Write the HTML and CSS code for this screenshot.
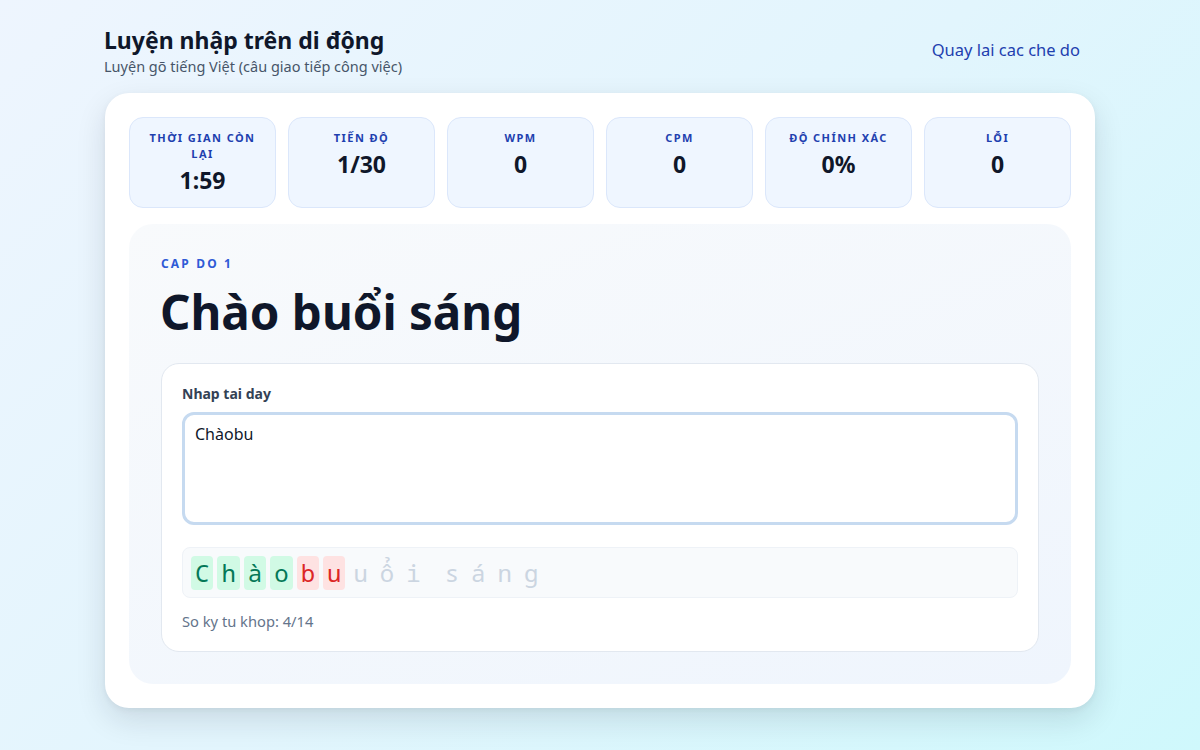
FILE: index.html
```html
<!DOCTYPE html>
<html lang="vi">
<head>
<meta charset="utf-8">
<title>Luyện nhập trên di động</title>
<link rel="stylesheet" href="styles.css">
</head>
<body>
<div class="page">
  <header class="header">
    <div>
      <h1 class="title">Luyện nhập trên di động</h1>
      <p class="subtitle">Luyện gõ tiếng Việt (câu giao tiếp công việc)</p>
    </div>
    <a class="back" href="#">Quay lai cac che do</a>
  </header>
  <main class="card">
    <section class="stats">
      <div class="stat"><div class="stat-label">Thời gian còn lại</div><div class="stat-value">1:59</div></div>
      <div class="stat"><div class="stat-label">Tiến độ</div><div class="stat-value">1/30</div></div>
      <div class="stat"><div class="stat-label">WPM</div><div class="stat-value">0</div></div>
      <div class="stat"><div class="stat-label">CPM</div><div class="stat-value">0</div></div>
      <div class="stat"><div class="stat-label">Độ chính xác</div><div class="stat-value">0%</div></div>
      <div class="stat"><div class="stat-label">Lỗi</div><div class="stat-value">0</div></div>
    </section>
    <section class="practice">
      <div class="level">CAP DO 1</div>
      <h2 class="phrase">Chào buổi sáng</h2>
      <div class="input-card">
        <label class="input-label">Nhap tai day</label>
        <div class="textarea">Chàobu</div>
        <div class="chars">
          <span class="ch ok">C</span><span class="ch ok">h</span><span class="ch ok">à</span><span class="ch ok">o</span><span class="ch bad">b</span><span class="ch bad">u</span><span class="ch">u</span><span class="ch">ổ</span><span class="ch">i</span><span class="ch"> </span><span class="ch">s</span><span class="ch">á</span><span class="ch">n</span><span class="ch">g</span>
        </div>
        <div class="match">So ky tu khop: 4/14</div>
      </div>
    </section>
  </main>
</div>
</body>
</html>
```
FILE: styles.css
```css
* { box-sizing: border-box; }
html, body { margin: 0; padding: 0; }
body {
  min-height: 750px;
  font-family: "Noto Sans", "Open Sans", sans-serif;
  color: #0f172a;
  background: linear-gradient(135deg, #eef5fe 0%, #e2f5fd 50%, #cff8fc 100%);
}
.page {
  width: 990px;
  margin: 0 auto;
  padding-top: 25px;
}
.header {
  display: flex;
  justify-content: space-between;
  align-items: flex-start;
}
.title {
  margin: 0 0 0 -1px;
  font-size: 23px;
  line-height: 30px;
  font-weight: 700;
  color: #0f172a;
}
.subtitle {
  margin: 1px 0 0 -1px;
  font-size: 14.5px;
  line-height: 20px;
  color: #475569;
}
.back {
  margin-top: 13px;
  margin-right: 15px;
  font-size: 16.5px;
  line-height: 24px;
  color: #1e40af;
  text-decoration: none;
}
.card {
  margin-top: 17px;
  background: #ffffff;
  border-radius: 24px;
  padding: 24px;
  box-shadow: 0 12px 30px rgba(15, 23, 42, 0.12), 0 2px 6px rgba(15, 23, 42, 0.05);
}
.stats {
  display: grid;
  grid-template-columns: repeat(6, 1fr);
  gap: 12px;
}
.stat {
  height: 91px;
  background: #eff6ff;
  border: 1px solid #dbe7fb;
  border-radius: 14px;
  padding: 12px 16px;
  text-align: center;
}
.stat-label {
  font-size: 11px;
  line-height: 16px;
  font-weight: 700;
  letter-spacing: 0.13em;
  text-transform: uppercase;
  color: #1e40af;
}
.stat-value {
  margin-top: 3px;
  font-size: 23px;
  line-height: 30px;
  font-weight: 700;
  color: #0f172a;
}
.practice {
  margin-top: 16px;
  border-radius: 24px;
  background: linear-gradient(160deg, #f8fafc 0%, #eff5fd 100%);
  padding: 31px 32px 32px;
}
.level {
  font-size: 12px;
  line-height: 18px;
  font-weight: 700;
  letter-spacing: 0.18em;
  color: #2f5bd6;
}
.phrase {
  margin: 9px 0 0 -1px;
  font-size: 47.5px;
  line-height: 60px;
  font-weight: 700;
  color: #0f172a;
}
.input-card {
  margin-top: 21px;
  background: #ffffff;
  border: 1px solid #e2e8f0;
  border-radius: 18px;
  padding: 20px 20px 20px;
}
.input-label {
  display: block;
  font-size: 14px;
  line-height: 20px;
  font-weight: 700;
  color: #334155;
}
.textarea {
  margin-top: 8px;
  height: 113px;
  border: 3px solid #c6daf0;
  border-radius: 12px;
  padding: 6px 10px;
  font-size: 16px;
  line-height: 26px;
  color: #0f172a;
  background: #ffffff;
}
.chars {
  margin-top: 22px;
  height: 51px;
  background: #f8fafc;
  border: 1px solid #eef2f7;
  border-radius: 8px;
  padding: 8px 8px;
  display: flex;
  align-items: center;
  gap: 4px;
  font-family: "Noto Sans Mono", "DejaVu Sans Mono", "Liberation Mono", monospace;
  font-size: 24px;
}
.ch {
  display: inline-block;
  height: 34px;
  line-height: 34px;
  padding: 0 4px;
  border-radius: 4px;
  color: #cbd5e1;
}
.ch.ok { background: #d1fae5; color: #047857; }
.ch.bad { background: #fee2e2; color: #dc2626; }
.match {
  margin-top: 13px;
  font-size: 14.7px;
  line-height: 20px;
  color: #64748b;
}
```
